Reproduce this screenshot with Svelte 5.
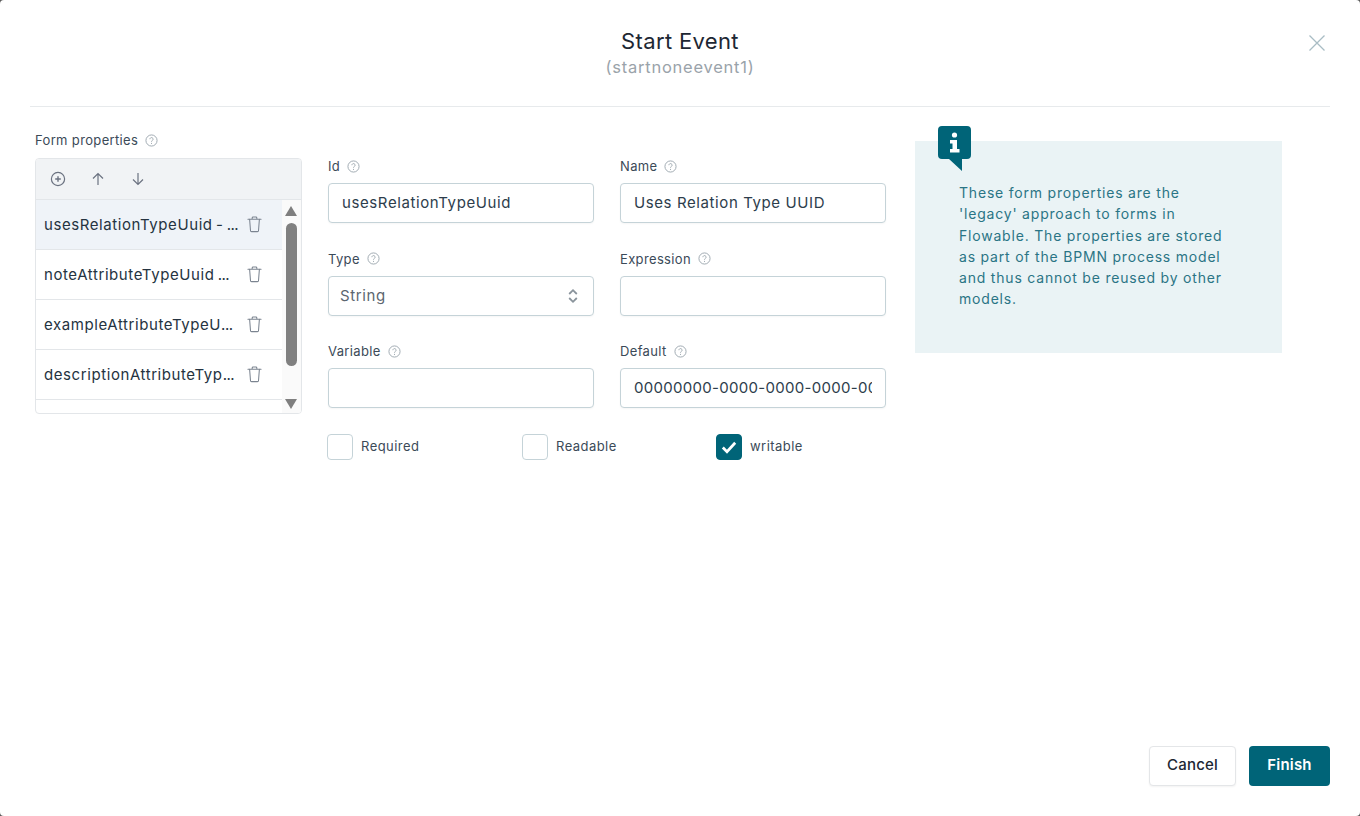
<script>
	const items = [
		{ label: 'usesRelationTypeUuid - ', active: true },
		{ label: 'noteAttributeTypeUuid ' },
		{ label: 'exampleAttributeTypeU' },
		{ label: 'descriptionAttributeTyp' }
	]
	const checks = [
		{ label: 'Required', checked: false, w: 195 },
		{ label: 'Readable', checked: false, w: 194 },
		{ label: 'writable', checked: true, w: 120 }
	]
</script>

{#snippet help()}
	<svg class="help" viewBox="0 0 14 14" width="13" height="13" fill="none" stroke="#9aa5ad" stroke-width="1">
		<circle cx="7" cy="7" r="6" />
		<path d="M5.3 5.6a1.7 1.7 0 1 1 2.6 1.4c-.6.4-.9.7-.9 1.3" />
		<circle cx="7" cy="10.1" r=".55" fill="#9aa5ad" stroke="none" />
	</svg>
{/snippet}

{#snippet trash()}
	<svg viewBox="0 0 16 18" width="15" height="17" fill="none" stroke="#7b8490" stroke-width="1.1" stroke-linecap="round" stroke-linejoin="round">
		<path d="M1 3.500h14M5.500 3.500V2c0-.6.4-1 1-1h3c.6 0 1 .4 1 1v1.500" />
		<path d="M2.800 3.500l.9 11.800c0 .8.500 1.300 1.200 1.300h6.200c.7 0 1.200-.5 1.200-1.300l.9-11.800" />
	</svg>
{/snippet}

<div class="modal">
	<header>
		<h1>Start Event</h1>
		<div class="sub">(startnoneevent1)</div>
		<svg class="close" viewBox="0 0 16 16" width="16" height="16" stroke="#a9bcc4" stroke-width="1.3" fill="none">
			<path d="M.5.5l15 15M15.500.5l-15 15" />
		</svg>
	</header>

	<main>
		<section class="props">
			<div class="label">Form properties {@render help()}</div>
			<div class="box">
				<div class="toolbar">
					<svg viewBox="0 0 16 16" width="16" height="16" fill="none" stroke="#6b7280" stroke-width="1.2">
						<circle cx="8" cy="8" r="6.600" />
						<path d="M8 5.200v5.600M5.200 8h5.600" stroke-width="1.400" />
					</svg>
					<svg viewBox="0 0 16 16" width="16" height="16" fill="none" stroke="#6b7280" stroke-width="1.2">
						<path d="M8 14V2.500M3 7.500l5-5 5 5" />
					</svg>
					<svg viewBox="0 0 16 16" width="16" height="16" fill="none" stroke="#6b7280" stroke-width="1.2">
						<path d="M8 2v11.500M3 8.500l5 5 5-5" />
					</svg>
				</div>
				<div class="scroller">
					<ul>
						{#each items as item}
							<li class:active={item.active}>
								<span>{item.label}<b>...</b></span>
								{@render trash()}
							</li>
						{/each}
					</ul>
					<div class="scrollbar">
						<i class="up"></i>
						<i class="thumb"></i>
						<i class="down"></i>
					</div>
				</div>
			</div>
		</section>

		<section class="form">
			<div class="fields">
				<div class="field">
					<div class="label">Id {@render help()}</div>
					<div class="input">usesRelationTypeUuid</div>
				</div>
				<div class="field">
					<div class="label">Name {@render help()}</div>
					<div class="input">Uses Relation Type UUID</div>
				</div>
				<div class="field">
					<div class="label">Type {@render help()}</div>
					<div class="input select">
						<span>String</span>
						<svg viewBox="0 0 10 16" width="10" height="16" fill="none" stroke="#8a949c" stroke-width="1.8">
							<path d="M1.200 6l3.800-3.800L8.800 6M1.200 10L5 13.800 8.800 10" />
						</svg>
					</div>
				</div>
				<div class="field">
					<div class="label">Expression {@render help()}</div>
					<div class="input"></div>
				</div>
				<div class="field">
					<div class="label">Variable {@render help()}</div>
					<div class="input"></div>
				</div>
				<div class="field">
					<div class="label">Default {@render help()}</div>
					<div class="input clip"><span>00000000-0000-0000-0000-000000000000</span></div>
				</div>
			</div>
			<div class="checks">
				{#each checks as c}
					<div class="check" style="width: {c.w}px">
						<span class="cb" class:on={c.checked}>
							{#if c.checked}
								<svg viewBox="0 0 16 16" width="18" height="18" fill="none" stroke="#fff" stroke-width="2.400">
									<path d="M2.500 8.500l3.700 3.700 7.300-8" />
								</svg>
							{/if}
						</span>
						<span class="txt">{c.label}</span>
					</div>
				{/each}
			</div>
		</section>

		<aside class="info">
			<svg class="badge" viewBox="0 0 33 45" width="33" height="45">
				<path d="M4 0h25a4 4 0 0 1 4 4v25a4 4 0 0 1-4 4h-5v12L11 33H4a4 4 0 0 1-4-4V4a4 4 0 0 1 4-4z" fill="#006478" />
				<circle cx="16.500" cy="9" r="2.600" fill="#fff" />
				<path d="M12 14h7v9h2.500v3.500H12V23h2.500v-5.500H12z" fill="#fff" />
			</svg>
			<p>These form properties are the 'legacy' approach to forms in Flowable. The properties are stored as part of the BPMN process model and thus cannot be reused by other models.</p>
		</aside>
	</main>

	<footer>
		<button class="cancel">Cancel</button>
		<button class="finish">Finish</button>
	</footer>
</div>

<style>
	:global(body) {
		margin: 0;
		background: #5a5a5a;
	}

	.modal {
		height: 816px;
		box-sizing: border-box;
		padding: 0 30px 30px;
		display: flex;
		flex-direction: column;
		font-family: Inter, 'Liberation Sans', sans-serif;
		color: #2d3d4c;
		background: #fff;
		border-radius: 4px;
	}

	header {
		position: relative;
		height: 78px;
		border-bottom: 1px solid #e7eaec;
		text-align: center;
		padding-top: 28px;
	}

	h1 {
		margin: 0;
		font-size: 22px;
		line-height: 27px;
		font-weight: 400;
		letter-spacing: 0.35px;
		color: #1d2733;
	}

	.sub {
		font-size: 16.500px;
		line-height: 24px;
		letter-spacing: 0.75px;
		color: #9aa3aa;
		margin-top: 0;
	}

	.close {
		position: absolute;
		right: 5px;
		top: 35px;
	}

	main {
		flex: 1;
		display: flex;
		padding: 25px 0 0 5px;
	}

	.label {
		font-size: 13px;
		line-height: 16px;
		letter-spacing: 0.35px;
		color: #3b4a58;
		display: flex;
		align-items: center;
		gap: 7px;
	}

	.props {
		width: 267px;
		margin-right: 26px;
	}

	.box {
		margin-top: 10px;
		height: 256px;
		box-sizing: border-box;
		border: 1px solid #e3e6e9;
		border-radius: 4px;
		overflow: hidden;
	}

	.toolbar {
		height: 40px;
		background: #f1f3f5;
		border-bottom: 1px solid #e3e6e9;
		display: flex;
		align-items: center;
		gap: 24px;
		padding-left: 14px;
	}

	.scroller {
		display: flex;
		height: 214px;
		overflow: hidden;
	}

	ul {
		list-style: none;
		margin: 0;
		padding: 0;
		flex: 1;
	}

	li {
		height: 50px;
		border-bottom: 1px solid #e3e6e9;
		box-sizing: border-box;
		display: flex;
		align-items: center;
		justify-content: space-between;
		padding: 0 20px 0 8px;
		font-size: 15px;
		letter-spacing: 0.58px;
		word-spacing: -1.500px;
		color: #253341;
	}

	li span {
		white-space: pre;
	}

	li b {
		font-weight: 400;
		letter-spacing: -0.5px;
	}

	li.active {
		background: #eff3f8;
	}

	.scrollbar {
		width: 19px;
		background: #fafafa;
		position: relative;
	}

	.scrollbar i {
		position: absolute;
		left: 3px;
	}

	.up,
	.down {
		width: 0;
		height: 0;
		border-left: 6.500px solid transparent;
		border-right: 6.500px solid transparent;
	}

	.up {
		top: 6px;
		border-bottom: 10px solid #7f7f7f;
	}

	.down {
		bottom: 5px;
		border-top: 10px solid #7f7f7f;
	}

	.scrollbar .thumb {
		left: 4px;
		top: 23px;
		width: 11px;
		height: 143px;
		border-radius: 6px;
		background: #808080;
	}

	.form {
		width: 558px;
		padding-top: 26px;
	}

	.fields {
		display: grid;
		grid-template-columns: 266px 266px;
		column-gap: 26px;
		row-gap: 27.500px;
	}

	.field {
		display: flex;
		flex-direction: column;
	}

	.field .label {
		height: 16px;
		margin-bottom: 9px;
	}

	.input {
		height: 40px;
		box-sizing: border-box;
		border: 1px solid #c5d3d8;
		border-radius: 4px;
		padding: 0 13px;
		font-size: 15px;
		letter-spacing: 0.6px;
		line-height: 38px;
		color: #2d3d4c;
		box-shadow: 0 1px 2px rgba(0, 0, 0, 0.04);
		background: #fff;
	}

	.select {
		display: flex;
		justify-content: space-between;
		align-items: center;
		color: #5c6670;
		padding-left: 11px;
		padding-right: 15px;
	}

	.clip {
		overflow: hidden;
		white-space: nowrap;
		letter-spacing: 0.3px;
	}

	.clip span {
		display: block;
		overflow: hidden;
	}

	.checks {
		display: flex;
		margin-top: 26px;
		margin-left: -1px;
	}

	.check {
		display: flex;
		align-items: center;
		gap: 8px;
		font-size: 13px;
		letter-spacing: 0.45px;
		color: #3b4a58;
	}

	.txt {
		padding-bottom: 3px;
	}

	.cb {
		width: 26px;
		height: 26px;
		box-sizing: border-box;
		border: 1px solid #c5d3d8;
		border-radius: 4px;
		display: flex;
		align-items: center;
		justify-content: center;
	}

	.cb.on {
		background: #006478;
		border-color: #006478;
	}

	.info {
		position: relative;
		width: 367px;
		height: 212px;
		margin-left: 29px;
		margin-top: 9px;
		background: #eaf3f5;
		box-sizing: border-box;
		padding: 41px 52px 0 44px;
	}

	.badge {
		position: absolute;
		left: 23px;
		top: -15px;
	}

	.info p {
		margin: 0;
		font-size: 14px;
		letter-spacing: 0.8px;
		line-height: 21.300px;
		color: #2a7585;
	}

	footer {
		display: flex;
		justify-content: flex-end;
		gap: 13px;
	}

	button {
		height: 40px;
		border-radius: 4px;
		font-family: inherit;
		font-size: 15px;
		font-weight: 500;
		letter-spacing: 0.2px;
		padding: 0 0 3px;
		cursor: pointer;
	}

	.cancel {
		width: 87px;
		background: #fff;
		border: 1px solid #e4e6e8;
		color: #1d2733;
		box-shadow: 0 1px 2px rgba(0, 0, 0, 0.05);
	}

	.finish {
		width: 81px;
		background: #006478;
		border: none;
		color: #fff;
		font-weight: 600;
	}
</style>
